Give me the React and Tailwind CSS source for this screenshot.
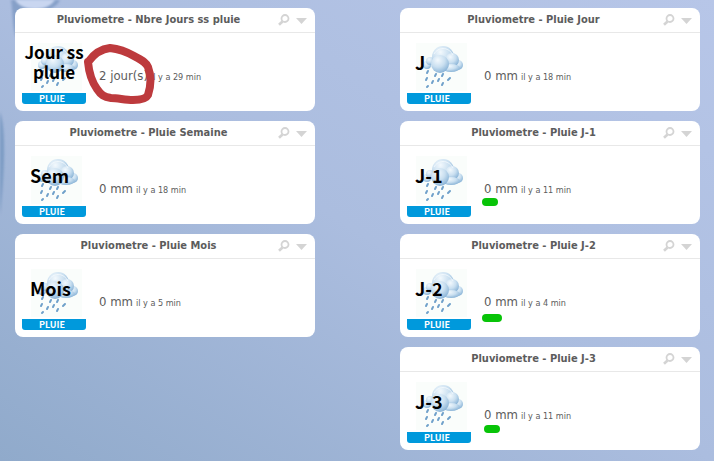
import { useId } from 'react'

const leftColumn = [
  { id: 'sans-pluie', title: 'Pluviometre - Nbre Jours ss pluie', label: 'Jour ss\npluie', value: '2 jour(s)', ago: 'il y a 29 min', circled: true },
  { id: 'semaine', title: 'Pluviometre - Pluie Semaine', label: 'Sem', value: '0 mm', ago: 'il y a 18 min' },
  { id: 'mois', title: 'Pluviometre - Pluie Mois', label: 'Mois', value: '0 mm', ago: 'il y a 5 min' },
]

const rightColumn = [
  { id: 'jour', title: 'Pluviometre - Pluie Jour', label: 'J', value: '0 mm', ago: 'il y a 18 min' },
  { id: 'j1', title: 'Pluviometre - Pluie J-1', label: 'J-1', value: '0 mm', ago: 'il y a 11 min', mark: '-left-0.5 top-[17px] w-4' },
  { id: 'j2', title: 'Pluviometre - Pluie J-2', label: 'J-2', value: '0 mm', ago: 'il y a 4 min', mark: '-left-0.5 top-5 w-5' },
  { id: 'j3', title: 'Pluviometre - Pluie J-3', label: 'J-3', value: '0 mm', ago: 'il y a 11 min', mark: 'left-0 top-[18px] w-4' },
]

function RainCloud() {
  const id = useId()
  return (
    <svg viewBox="0 0 51 48" className="h-12 w-[51px] bg-[#fafdfb]" aria-hidden="true">
      <defs>
        <radialGradient id={id} cx="0.38" cy="0.28" r="0.8">
          <stop offset="0" stopColor="#f3f9fd" />
          <stop offset="0.5" stopColor="#c9dff0" />
          <stop offset="1" stopColor="#7dabd2" />
        </radialGradient>
      </defs>
      <g fill={`url(#${id})`}>
        <circle cx="11" cy="22" r="4" />
        <circle cx="14" cy="18" r="4" />
        <circle cx="42" cy="22" r="5" />
        <circle cx="27" cy="14" r="11" />
        <circle cx="36" cy="17" r="7" />
        <ellipse cx="35" cy="25" rx="9" ry="4" />
        <circle cx="24" cy="21" r="9" />
      </g>
      <path d="M18 11C22 4 32 3 37 12" fill="none" stroke="#f5fafe" opacity="0.8" />
      <path
        d="M12 28l-1 2M20 31l-1 2M27 31l-1 2M11 35l-1 2M34 35l-2 2M17 38l-1 2M23 36l-1 2M12 43l-1 1M27 40l-1 2"
        stroke="#6fa0ca"
        strokeWidth="2"
        strokeLinecap="round"
      />
    </svg>
  )
}

function Picture({ label }) {
  const twoLines = label.includes('\n')
  return (
    <div className="relative w-16 shrink-0 font-['Noto_Sans_CJK_SC',sans-serif] font-bold">
      <div className="flex h-[52px] justify-end pr-1 pt-0.5">
        <RainCloud />
      </div>
      <div className="h-[11px] overflow-hidden rounded-b-[3px] bg-[#0099dc] pr-1 text-center text-[9px] leading-[11px] text-white">PLUIE</div>
      {twoLines ? (
        <p className="absolute inset-x-0 top-px whitespace-pre text-center text-[17px] leading-5 text-black">{label}</p>
      ) : (
        <p className="absolute left-2 top-[9px] text-[18px] leading-6 text-black">{label}</p>
      )}
    </div>
  )
}

function Widget({ title, label, value, ago, circled, mark }) {
  return (
    <section className="rounded-lg bg-white text-[#5c5c5c]">
      <header className="relative flex h-[25px] items-center justify-center border-b border-[#e8e8e8]">
        <h2 className="pr-[33px] text-[11px] font-bold leading-4">{title}</h2>
        <div className="absolute right-2 top-1.5 flex items-center gap-1.5">
          <button type="button" aria-label="Rechercher">
            <svg viewBox="0 0 12 12" className="h-3 w-3" fill="none" stroke="#d4d4d4">
              <circle cx="7" cy="4.500" r="3.500" strokeWidth="1.800" />
              <path d="M4.500 7.500L1 10.800" strokeWidth="2.600" />
            </svg>
          </button>
          <button type="button" aria-label="Menu">
            <svg viewBox="0 0 11 12" className="h-3 w-[11px]" fill="#d4d4d4">
              <path d="M0 4h11L5.500 10z" />
            </svg>
          </button>
        </div>
      </header>
      <div className="flex gap-[13px] pb-[7px] pl-[7px] pt-2">
        <Picture label={label} />
        <div className="relative mt-[27px] flex h-4 items-baseline gap-[3px] whitespace-nowrap leading-4">
          <span className="text-[13px]">{value}</span>
          <span className="text-[9px]">{ago}</span>
          {mark && <span className={`absolute h-2 rounded-full bg-[#08c408] ${mark}`} />}
          {circled && (
            <svg viewBox="0 0 72 62" className="absolute -left-4 -top-[25px] h-[62px] w-[72px]" aria-hidden="true">
              <path
                d="M6 18C11 11 19 6 27 5C36 6 44 9 51 13C58 17 63 19 65 24C68 32 68 43 65 52C63 56 57 57 50 57C42 57 35 55 28 55C21 54 18 52 14 46C9 39 6 30 5 19"
                fill="none"
                stroke="#bd3a3d"
                strokeWidth="8"
                strokeLinecap="round"
                strokeLinejoin="round"
              />
            </svg>
          )}
        </div>
      </div>
    </section>
  )
}

export default function App() {
  return (
    <main className="relative isolate min-h-screen overflow-hidden bg-linear-to-bl from-[#b7c6e8] via-[#abbddf] to-[#90aacb] font-['DejaVu_Sans_Condensed','DejaVu_Sans',sans-serif]">
      <svg className="absolute left-0 top-0 -z-10 h-[240px] w-[70px] blur-[1px]" viewBox="0 0 70 240" aria-hidden="true">
        <path d="M11 0H60C57 6 50 10 40 12L16 38C12 26 13 12 11 0z" fill="#86a0c8" />
        <path d="M15 0H55C51 6 44 9 35 9C26 9 19 6 15 0z" fill="#c9d6f0" />
        <path d="M0 112C5 125 6 160 0 215z" fill="#7d9cc4" />
      </svg>
      <div className="grid grid-cols-2 items-start gap-x-[85px] pb-[11px] pl-[15px] pr-[14px] pt-2">
        <div className="grid gap-2.5">
          {leftColumn.map((w) => <Widget key={w.id} {...w} />)}
        </div>
        <div className="grid gap-2.5">
          {rightColumn.map((w) => <Widget key={w.id} {...w} />)}
        </div>
      </div>
    </main>
  )
}
